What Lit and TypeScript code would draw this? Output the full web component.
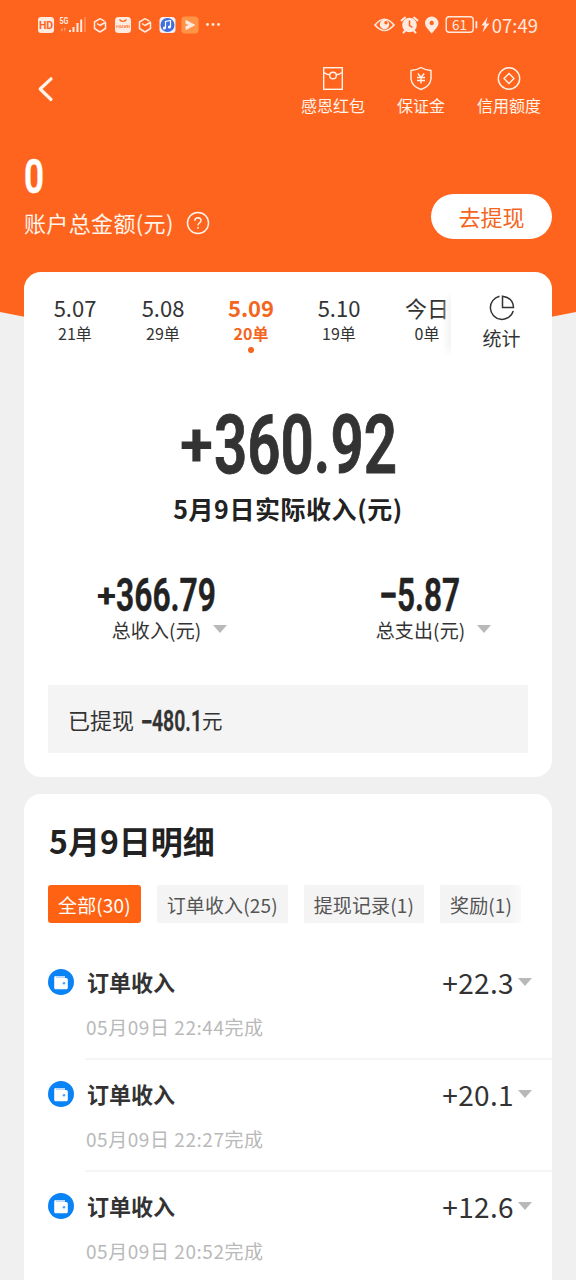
import { LitElement, html, css, svg } from "lit";
import { customElement, property } from "lit/decorators.js";

/** Condensed numeral set to an exact width; the sign may be smaller than the digits. */
@customElement("condensed-number")
class CondensedNumber extends LitElement {
  @property() sign = "";
  @property() value = "";
  @property({ type: Number }) signWidth = 0;
  @property({ type: Number }) gap = 0;
  @property({ type: Number }) width = 0;
  @property({ type: Number }) size = 0;

  static styles = css`
    :host { display: block; }
    svg { display: block; overflow: visible; }
    text { font-family: Roboto, "Liberation Sans", sans-serif; font-weight: 600; fill: currentColor; stroke: currentColor; }
    .sign { font-weight: 700; }
  `;

  render() {
    const h = Math.round(this.size * 0.711);
    const start = this.sign ? this.signWidth + this.gap : 0;
    const signSize = this.size * 0.74;
    const minus = this.sign === "−";
    return html`<svg width=${this.width} height=${h}>
      ${this.sign
        ? svg`<text class="sign" x="0" y=${h - this.size * 0.085} font-size=${signSize} stroke-width=${minus ? this.size * 0.035 : 0} textLength=${this.signWidth} lengthAdjust="spacingAndGlyphs">${this.sign}</text>`
        : ""}
      ${svg`<text x=${start} y=${h} font-size=${this.size} stroke-width=${this.size * 0.012} textLength=${this.width - start} lengthAdjust="spacingAndGlyphs">${this.value}</text>`}
    </svg>`;
  }
}

const caret = html`<svg class="caret" width="14" height="8" viewBox="0 0 14 8"><path d="M0 0H14L7 8Z" fill="#b9b9b9" /></svg>`;

const wallet = html`<svg width="26" height="26" viewBox="0 0 26 26">
  <circle cx="13" cy="13" r="13" fill="#0a84f5" />
  <path d="M7 7H17V9H7Z" fill="#b9dcfc" />
  <path d="M6.200 8.500Q6.200 7 7.500 7Q7.300 9 9 9H18.300Q19.800 9 19.800 10.500V18.700Q19.800 20.200 18.300 20.200H7.700Q6.200 20.200 6.200 18.700Z" fill="#fff" />
  <circle cx="16" cy="14.300" r="1.300" fill="#4aa6fa" />
</svg>`;

const days = [
  ["5.07", "21单"],
  ["5.08", "29单"],
  ["5.09", "20单"],
  ["5.10", "19单"],
  ["今日", "0单"],
];
const chips = ["全部(30)", "订单收入(25)", "提现记录(1)", "奖励(1)"];
const orders = [
  ["+22.3", "05月09日 22:44完成"],
  ["+20.1", "05月09日 22:27完成"],
  ["+12.6", "05月09日 20:52完成"],
];

@customElement("app-root")
class AppRoot extends LitElement {
  static styles = css`
    :host {
      display: block; position: relative; width: 576px; height: 1280px; overflow: hidden;
      background: #f0f0f0; color: #333;
      font-family: "Noto Sans CJK SC", sans-serif; font-size: 19px; line-height: 24px;
      white-space: nowrap;
    }
    * { box-sizing: border-box; }
    svg { display: block; flex: none; }
    .arc { position: absolute; left: 0; top: 0; }
    .page { position: relative; }
    .status { height: 50px; padding: 0 38px; display: flex; justify-content: space-between; color: #ffeadf; }
    .group { display: flex; align-items: center; }
    .clock { font-size: 18.500px; margin-left: 2px; }
    .nav { height: 82px; display: flex; justify-content: space-between; padding: 0 23px 0 36px; color: #fff4ea; }
    .back { margin-top: 26px; }
    .tools { display: flex; }
    .tool { width: 88px; padding-top: 16px; display: flex; flex-direction: column; align-items: center; font-size: 16px; line-height: 24px; gap: 2px; }
    .balance { height: 140px; padding: 27px 24px 0 24px; display: flex; justify-content: space-between; color: #fff; }
    .label { display: flex; align-items: center; gap: 12px; margin-top: 16px; font-size: 22px; line-height: 26px; letter-spacing: .35px; color: #fff4ea; }
    .label svg { margin-top: 1px; }
    .withdraw { margin-top: 35px; width: 121px; height: 45px; border-radius: 23px; background: #fff; color: #f4651e; font-size: 22px; line-height: 45px; text-align: center; }
    .card { margin: 0 24px; background: #fff; border-radius: 17px; overflow: hidden; }
    .summary { height: 505px; }
    .tabs { display: flex; height: 98px; }
    .days { width: 427px; padding: 22px 0 0 7px; display: flex; overflow: hidden; height: 90px; position: relative; }
    .days::after { content: ""; position: absolute; right: 0; top: 20px; width: 9px; height: 66px; background: linear-gradient(90deg, rgba(240,240,240,0), #f3f3f3); -webkit-mask-image: linear-gradient(transparent, #000 20%, #000 80%, transparent); }
    .day { width: 88px; flex: none; text-align: center; }
    .date { font-size: 22px; line-height: 26px; margin-bottom: 1px; }
    .count { font-size: 16px; line-height: 24px; }
    .on { color: #f4651e; font-weight: 700; }
    .dot { width: 6px; height: 6px; border-radius: 50%; background: #f4651e; margin: 2px auto 0; }
    .stats { flex: 1; padding-top: 22px; display: flex; flex-direction: column; align-items: center; gap: 4px; }
    .total { padding-top: 45px; height: 156px; display: flex; flex-direction: column; align-items: center; }
    .caption { margin-top: 20px; font-size: 25px; line-height: 30px; font-weight: 700; letter-spacing: .55px; color: #222; }
    .split { display: flex; color: #222; height: 159px; padding-top: 53px; }
    .half { width: 264px; display: flex; flex-direction: column; align-items: center; }
    .sub { display: flex; align-items: center; gap: 12px; margin: 7px 0 0 27px; color: #333; letter-spacing: .15px; }
    .sub svg { margin-top: -2px; }
    .drawn { margin: 0 24px; height: 68px; background: #f4f4f4; padding-left: 20px; display: flex; align-items: center; font-size: 22px; }
    .drawn condensed-number { margin: 2px 0 0 7px; }
    .unit { font-size: 20.500px; margin-top: 1px; }
    .details { margin-top: 17px; padding-top: 24px; height: 520px; border-radius: 17px 17px 0 0; }
    .title { margin-left: 25px; font-size: 32px; line-height: 44px; font-weight: 700; color: #222; }
    .chips { display: flex; gap: 16px; margin: 23px 24px 0; }
    .chip { height: 38px; line-height: 39px; padding: 0 10px; background: #f4f4f4; color: #555; border-radius: 2px; letter-spacing: .13px; }
    .active { background: #ff6213; color: #fff; border-radius: 3px; }
    .chip:last-child { background: linear-gradient(90deg, #f4f4f4 85%, #fafafa); padding-right: 9px; }
    .order { display: flex; height: 112px; margin-left: 24px; }
    .badge { padding-top: 21px; width: 37px; flex: none; }
    .info { flex: 1; display: flex; justify-content: space-between; border-bottom: 2px solid #f5f5f5; padding-top: 18px; }
    .name { font-size: 22px; line-height: 30px; font-weight: 700; margin-left: 2px; }
    .time { color: #b9b9b9; margin: 19px 0 0 1px; letter-spacing: .55px; }
    .amount { display: flex; font-size: 28px; line-height: 32px; gap: 4px; padding-right: 20px; letter-spacing: .35px; }
    .amount .caret { margin-top: 12px; }
    .list { margin-top: 25px; }
  `;

  render() {
    return html`
      <svg class="arc" width="576" height="350"><path d="M0 0H576V312Q288 372 0 312Z" fill="#ff641f" /></svg>
      <div class="page">
        <div class="status">
          <div class="group">
            <svg width="190" height="24" viewBox="38 13 190 24" font-family="Roboto, sans-serif" fill="#ffeadf">
              <rect x="38" y="17" width="16" height="16" rx="3" />
              <text x="46" y="28.800" font-size="10.500" font-weight="700" text-anchor="middle" fill="#ff641f">HD</text>
              <text x="59.500" y="23.500" font-size="9" font-weight="700" textLength="9" lengthAdjust="spacingAndGlyphs">5G</text>
              <path d="M60.500 30L62.500 27.500V32ZM66 28L64 32V27.500Z" opacity=".4" />
              <path d="M69 30h2v2h-2zM72.500 27h2v5h-2zM76.500 23h2v9h-2zM80.200 19.500h2v12.500h-2z" />
              <path d="M84 17h2v15h-2z" opacity=".25" />
              <g transform="translate(93 17)">${svg`<path d="M12.500 6V11.500L7 15L1.500 11.500V5L7 1.700L11.500 4.200M4 6.500L7 8.500L13 5" fill="none" stroke="#ffeadf" stroke-width="1.500" stroke-linejoin="round" />`}</g>
              <rect x="115" y="17" width="16" height="16" rx="3.500" />
              <path d="M119.500 19.500Q123 23.500 126.500 19.500" fill="none" stroke="#ff641f" stroke-width="1.200" />
              <text x="116" y="27.500" font-size="4" font-weight="700" fill="#ff641f" opacity=".8" textLength="14" lengthAdjust="spacingAndGlyphs">HUAWEI</text>
              <g transform="translate(138 17)">${svg`<path d="M12.500 6V11.500L7 15L1.500 11.500V5L7 1.700L11.500 4.200M4 6.500L7 8.500L13 5" fill="none" stroke="#ffeadf" stroke-width="1.500" stroke-linejoin="round" />`}</g>
              <rect x="159.500" y="17" width="16" height="16" rx="3.500" fill="#f3eef5" />
              <circle cx="167.500" cy="25" r="7" fill="#4070dc" />
              <path d="M165.500 28V21.500L170.500 20.500V27" fill="none" stroke="#fff" stroke-width="1.200" />
              <circle cx="164.400" cy="28" r="1.500" fill="#fff" /><circle cx="169.400" cy="27" r="1.500" fill="#fff" />
              <rect x="181.500" y="16.500" width="17" height="17" rx="3.500" fill="#ff9448" />
              <path d="M186 20.500L194.500 25L186 29.500V26.500L190 25L186 23.500Z" fill="#ffeadf" stroke="#ffeadf" stroke-width="1" stroke-linejoin="round" />
              <circle cx="207.500" cy="24.500" r="1.400" /><circle cx="213" cy="24.500" r="1.400" /><circle cx="218.500" cy="24.500" r="1.400" />
            </svg>
          </div>
          <div class="group">
            <svg width="116" height="24" viewBox="374 13 116 24" fill="#ffeadf">
              <path d="M375 25Q384.500 13.500 394 25Q384.500 36 375 25Z" fill="none" stroke="#ffeadf" stroke-width="1.700" />
              <circle cx="384.500" cy="24.500" r="4.700" /><circle cx="386" cy="22.800" r="1.700" fill="#ff641f" />
              <circle cx="409.500" cy="25" r="7.300" />
              <path d="M401.500 20.500L405 17.500M417.500 20.500L414 17.500M405 31L403.500 32.500M414 31L415.500 32.500" stroke="#ffeadf" stroke-width="1.900" stroke-linecap="round" />
              <path d="M409.500 20.500V25.500L412.500 27.500" fill="none" stroke="#ff641f" stroke-width="1.500" />
              <path fill-rule="evenodd" d="M431.700 33.500C428 29 425 26.500 425 23A6.700 6.500 0 0 1 438.400 23C438.400 26.500 435.500 29 431.700 33.500ZM431.700 20.700A2.200 2.200 0 1 0 431.700 25.100A2.200 2.200 0 1 0 431.700 20.700Z" />
              <rect x="446.200" y="16.800" width="27" height="15.500" rx="3" fill="none" stroke="#ffeadf" stroke-width="1.400" />
              <rect x="475.500" y="21" width="1.800" height="7.500" rx=".8" />
              <text x="459.500" y="29.600" font-size="13.500" text-anchor="middle" font-family="Noto Sans CJK SC">61</text>
              <path d="M487.500 17L481.500 25.500H484.500L482.500 32.500L489.500 23.500H486Z" />
            </svg>
            <span class="clock">07:49</span>
          </div>
        </div>
        <div class="nav">
          <svg class="back" width="18" height="26" viewBox="0 0 18 26"><path d="M15 2.800L4.200 13L15 23.500" fill="none" stroke="#fff4ea" stroke-width="3.200" stroke-linecap="round" stroke-linejoin="round" /></svg>
          <div class="tools">
            <div class="tool">
              <svg width="24" height="25" viewBox="0 0 24 25" fill="none" stroke="#fff4ea" stroke-width="1.400"><rect x="2.700" y="1.700" width="18.600" height="21.600" /><path d="M3 6.500Q5.500 8.500 8.800 8.800M21 6.500Q18.500 8.500 15.200 8.800" /><circle cx="12" cy="9.500" r="3.300" /></svg>
              感恩红包
            </div>
            <div class="tool">
              <svg width="24" height="25" viewBox="0 0 24 25" fill="none" stroke="#fff4ea" stroke-width="1.400" stroke-linejoin="round"><path d="M12 1.500Q16.500 4.300 22 4.500V13Q21 20.500 12 23.500Q3 20.500 2 13V4.500Q7.500 4.300 12 1.500Z" /><path d="M8.800 7.500L12 11.300L15.200 7.500M8 11.500H16M8 14.500H16M12 11.300V17.500" /></svg>
              保证金
            </div>
            <div class="tool">
              <svg width="24" height="25" viewBox="0 0 24 25" fill="none" stroke="#fff4ea" stroke-width="1.400"><circle cx="12" cy="12.500" r="10.700" /><path d="M12 7.500L17 12.500L12 17.500L7 12.500Z" /></svg>
              信用额度
            </div>
          </div>
        </div>
        <div class="balance">
          <div>
            <condensed-number value="0" width="20" size="48"></condensed-number>
            <div class="label">账户总金额(元)
              <svg width="24" height="24" viewBox="0 0 24 24" fill="none" stroke="#fff4ea" stroke-width="1.500"><circle cx="12" cy="12" r="10.500" /><path d="M8.800 9.800Q9 6.800 12 6.800Q15 7 15 9.500Q15 11 13.300 12Q12 13 12 14.500M12 16V17.800" /></svg>
            </div>
          </div>
          <div class="withdraw">去提现</div>
        </div>

        <div class="card summary">
          <div class="tabs">
            <div class="days">
              ${days.map(([d, n], i) => html`
                <div class="day ${i === 2 ? "on" : ""}">
                  <div class="date">${d}</div>
                  <div class="count">${n}</div>
                  ${i === 2 ? html`<div class="dot"></div>` : ""}
                </div>`)}
            </div>
            <div class="stats">
              <svg width="28" height="28" viewBox="0 0 28 28" fill="none" stroke="#333" stroke-width="1.500"><path d="M11.500 2.300A11.700 11.700 0 1 0 25.300 17" /><path d="M14.500 2.200V13.500H25.500Q25 3.500 14.500 2.200Z" /></svg>
              统计
            </div>
          </div>
          <div class="total">
            <condensed-number sign="+" .signWidth=${33} .gap=${1} value="360.92" width="217" size="82"></condensed-number>
            <div class="caption">5月9日实际收入(元)</div>
          </div>
          <div class="split">
            <div class="half">
              <condensed-number sign="+" .signWidth=${19} .gap=${0} value="366.79" width="119" size="45.500"></condensed-number>
              <div class="sub">总收入(元) ${caret}</div>
            </div>
            <div class="half">
              <condensed-number sign="−" .signWidth=${17} .gap=${0} value="5.87" width="80" size="45.500"></condensed-number>
              <div class="sub">总支出(元) ${caret}</div>
            </div>
          </div>
          <div class="drawn">已提现<condensed-number sign="−" .signWidth=${11} .gap=${0} value="480.1" width="61" size="29"></condensed-number><span class="unit">元</span></div>
        </div>

        <div class="card details">
          <div class="title">5月9日明细</div>
          <div class="chips">
            ${chips.map((c, i) => html`<div class="chip ${i === 0 ? "active" : ""}">${c}</div>`)}
          </div>
          <div class="list">
            ${orders.map(([a, t]) => html`
              <div class="order">
                <div class="badge">${wallet}</div>
                <div class="info">
                  <div>
                    <div class="name">订单收入</div>
                    <div class="time">${t}</div>
                  </div>
                  <div class="amount">${a}${caret}</div>
                </div>
              </div>`)}
          </div>
        </div>
      </div>
    `;
  }
}
